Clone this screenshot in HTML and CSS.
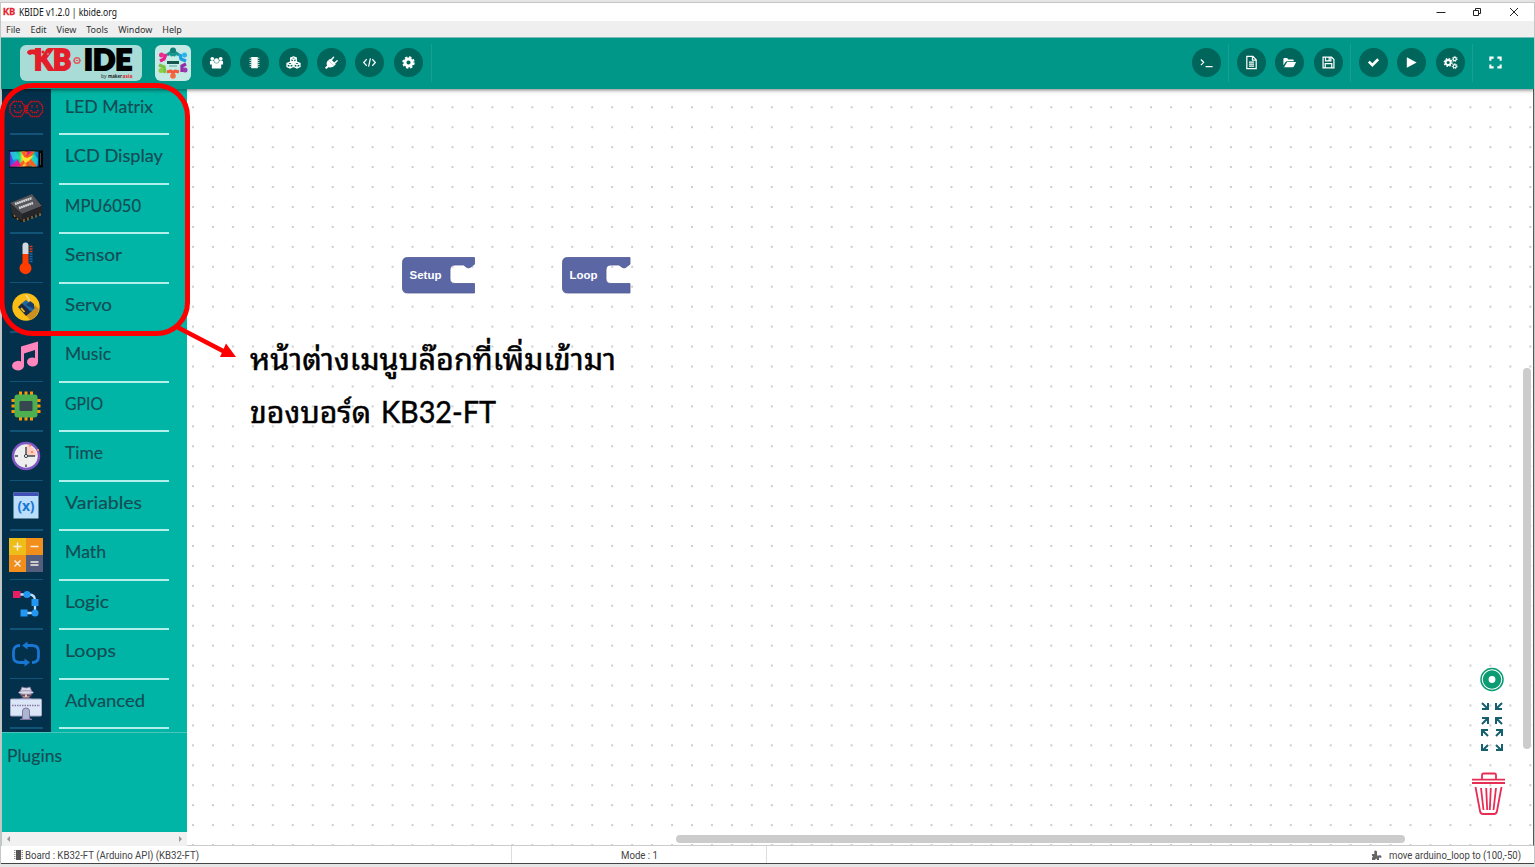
FILE: index.html
```html
<!DOCTYPE html>
<html lang="th">
<head>
<meta charset="utf-8">
<title>KBIDE v1.2.0 | kbide.org</title>
<link rel="stylesheet" href="styles.css">
</head>
<body>
<div class="window">
  <header class="titlebar">
    <svg class="app-icon" width="12" height="12" viewBox="0 0 12 12"><text x="0" y="9" textLength="12" lengthAdjust="spacingAndGlyphs" class="app-mark">KB</text></svg>
    <svg width="100" height="16" class="title"><text x="0" y="12" textLength="98" lengthAdjust="spacingAndGlyphs">KBIDE v1.2.0 | kbide.org</text></svg>
    <div class="win-controls">
      <svg width="12" height="12"><path d="M1.500 6.500h9"/></svg>
      <svg width="12" height="12"><path d="M1.500 4.500h5v5h-5zM3.500 4.500v-2h5v5h-2"/></svg>
      <svg width="12" height="12"><path d="M2 2l8 8M10 2l-8 8"/></svg>
    </div>
  </header>
  <nav class="menubar"><span>File</span><span>Edit</span><span>View</span><span>Tools</span><span>Window</span><span>Help</span></nav>

  <div class="toolbar">
    <div class="logo">
      <svg width="122" height="36" viewBox="0 0 122 36">
        <text x="14" y="25" class="logo-red" textLength="37" lengthAdjust="spacingAndGlyphs">KB</text>
        <path d="M7 8q0-3.500 5-3.500h5v6l-5-1.500q-2 2.500-5-1z" fill="#e31e2a"/>
        <circle cx="23" cy="7" r="1.600" fill="#e31e2a"/><circle cx="27" cy="5.500" r="1.300" fill="#e31e2a"/><circle cx="28" cy="9" r="1.300" fill="#a9dcd6" stroke="#e31e2a"/>
        <circle cx="57" cy="15.500" r="2.800" fill="none" stroke="#e2585c" stroke-width="1.500"/><path d="M53 15.500h2M59 15.500h2M56 15.500h2" stroke="#e2585c" stroke-width="1.200"/>
        <text x="64" y="25" class="logo-black" textLength="48" lengthAdjust="spacingAndGlyphs">IDE</text>
        <g class="logo-by"><text x="81" y="33">by</text><text x="88" y="33" class="bold" textLength="14" lengthAdjust="spacingAndGlyphs">maker</text><text x="102.500" y="33" class="bold asia" textLength="10" lengthAdjust="spacingAndGlyphs">asia</text></g>
      </svg>
    </div>
    <div class="logo community">
      <svg width="36" height="36" viewBox="0 0 36 36">
        <g fill="none" stroke-width="3.200">
          <path d="M12 10l3-2 3 3 3-3 3 2" stroke="#16988e"/><path d="M25 9l1 5 5 2" stroke="#1c9fe0"/>
          <path d="M31 19l-4 2v6" stroke="#8e2fa5"/><path d="M24 27l-4-1-2 2-2-2-4 1" stroke="#f15a3c"/>
          <path d="M10 28l-1-6-5-2" stroke="#79c143"/><path d="M5 16l4-2 2-5" stroke="#e5208c"/>
        </g>
        <circle cx="18" cy="5.500" r="3" fill="#0f7f78"/><circle cx="29.500" cy="10" r="2.500" fill="#29b4ee"/><circle cx="30" cy="25" r="2.500" fill="#9a38b0"/>
        <circle cx="18" cy="31" r="2.800" fill="#f36a40"/><circle cx="6" cy="25.500" r="2.500" fill="#8bcf45"/><circle cx="6.500" cy="10" r="2.500" fill="#ef2d91"/>
        <path d="M13 13l5-2 5 2 3 5-3 5-5 2-5-2-3-5z" fill="#c7eee7"/>
        <path d="M12 17.500h12" stroke="#14584f" stroke-width="3"/><path d="M14 21h8" stroke="#56a99f"/>
      </svg>
    </div>
    <div class="buttons main-buttons">
      <button><svg viewBox="0 0 16 16"><circle cx="3.500" cy="4" r="2"/><circle cx="12.500" cy="4" r="2"/><path d="M1 10V7.500Q1 6 2.500 6.200h3L6 8h4l.5-1.800h3Q15 6 15 7.500V10h-2v3.500q0 1-1 1H4q-1 0-1-1V10z"/><circle cx="8" cy="6" r="2.800" stroke="#00655a" stroke-width=".5"/></svg></button>
      <button><svg viewBox="0 0 16 16"><path d="M4.500 2h7v12h-7zM2.800 3h1.200v1H2.800zm0 2.300h1.200v1H2.800zm0 2.200h1.200v1H2.800zm0 2.200h1.200v1H2.800zm0 2.200h1.200v1H2.800zM12 3h1.200v1H12zm0 2.300h1.200v1H12zm0 2.200h1.200v1H12zm0 2.200h1.200v1H12zm0 2.200h1.200v1H12z"/></svg></button>
      <button><svg viewBox="0 0 16 16" class="line cube"><path d="M8 2l3 1.200v3.300L8 7.800 5 6.500V3.200zM5 3.300l3 1.400 3-1.400M8 4.700V8M4.300 7.700l3.200 1.300v3.400l-3.200 1.400-3.200-1.400V9zM1.100 9.100l3.200 1.400 3.200-1.400M4.300 10.500v3.300M11.700 7.700l3.200 1.300v3.400l-3.200 1.400-3.200-1.400V9zM8.500 9.100l3.200 1.400 3.200-1.400M11.700 10.500v3.300"/></svg></button>
      <button><svg viewBox="0 0 16 16"><path d="M4.500 5.500l6.200 6.200c-2 1.800-4.200 1.900-5.600 1L2.500 15 1 13.600l2.300-2.500C2.300 9.500 2.600 7.200 4.500 5.500zM6.200 5.700l3.500-3.900q1.300-.5 1.300.9L8.500 5.700l2.300 2.200 3-2.600q1.300 0 .9 1.200L11.200 10z"/><path d="M4.500 5.500L6.500 4l6 6-1.800 1.700z"/></svg></button>
      <button><svg viewBox="0 0 16 16" class="line"><path d="M5 4.500L1.800 8 5 11.500M11 4.500L14.200 8 11 11.500M9 3.500l-2 9"/></svg></button>
      <button><svg viewBox="0 0 16 16"><use href="#gear"/></svg></button>
    </div>
    <i class="divider first"></i>
    <div class="tool-right">
      <button><svg viewBox="0 0 16 16" class="line"><path d="M2 4.800l3 3-3 3M7 12.500h7.500"/></svg></button>
      <i class="divider"></i>
      <div class="buttons">
        <button><svg viewBox="0 0 16 16" class="line"><path d="M3 1.500h6.500l3.500 3.500v9.500H3zM9 1.500v4h4M5.300 7.500h5.400M5.300 9.700h5.400M5.300 11.900h5.400"/></svg></button>
        <button><svg viewBox="0 0 16 16"><path d="M1.500 11V4.200q0-1 1-1h3l1.300 1.500h4.700q1 0 1 1v1H5.300q-1 0-1.500.8zM5.500 7.500H15l-2.400 4.700q-.4.800-1.200.8H2.200z"/></svg></button>
        <button><svg viewBox="0 0 16 16" class="line"><path d="M2.200 2.200h9l2.600 2.600v9H2.200zM4.800 2.500v3.800h5.700V2.500M4.500 13.500V9.300h7v4.200M8.700 3v2.500"/></svg></button>
      </div>
      <i class="divider"></i>
      <div class="buttons">
        <button><svg viewBox="0 0 16 16"><path d="M2 8l2-2 2.800 2.700L12 3.500l2 2L6.800 12.700z"/></svg></button>
        <button><svg viewBox="0 0 16 16"><path d="M3 2.500L13.500 8 3 13.500z"/></svg></button>
        <button><svg viewBox="0 0 16 16" class="gears"><circle cx="5.500" cy="8" r="2.700" stroke-width="2"/><circle cx="5.500" cy="8" r="4.200" stroke-width="1.300" stroke-dasharray="1.750 1.550"/><circle cx="12.500" cy="4.200" r="1.700" stroke-width="1.300"/><circle cx="12.500" cy="4.200" r="2.700" stroke-dasharray="1.200 1.200"/><circle cx="12.500" cy="11.900" r="1.700" stroke-width="1.300"/><circle cx="12.500" cy="11.900" r="2.700" stroke-dasharray="1.200 1.200"/></svg></button>
      </div>
      <i class="divider"></i>
      <button class="flat"><svg viewBox="0 0 16 16" class="line heavy"><path d="M2.500 6V2.800H6M10 2.800h3.500V6M13.500 10v3.200H10M6 13.200H2.500V10"/></svg></button>
    </div>
  </div>

  <main class="workspace">
    <aside class="sidebar">
      <div class="toolbox">
        <div class="row"><div class="cell"><svg viewBox="0 0 34 34"><g fill="none" stroke="#d90d16" stroke-width="1.500" stroke-dasharray="1.600 .6"><path d="M4.500 9.500h7.500l3.500 4v6.500l-3.500 4.500H4.500L1 20v-6.500zM22 9.500h7.500l4 4v6.500l-4 4.500H22l-3.500-4.500v-6.500zM5 18l2 2.500h4l2-2.500M21.500 18l2 2.500h4l2-2.500M6 13v3M11 13v3M23 13v3M28 13v3M17 13v9"/></g></svg></div><div class="label"><svg><text x="0" y="18" textLength="88" lengthAdjust="spacingAndGlyphs">LED Matrix</text></svg></div></div>
        <div class="row"><div class="cell"><svg viewBox="0 0 34 34">
          <defs><linearGradient id="spectrum"><stop offset="0" stop-color="#6a25d7"/><stop offset=".18" stop-color="#168bf2"/><stop offset=".34" stop-color="#24d67b"/><stop offset=".48" stop-color="#ffed3b"/><stop offset=".62" stop-color="#ff4824"/><stop offset=".78" stop-color="#20cf78"/><stop offset="1" stop-color="#086ee8"/></linearGradient></defs>
          <path d="M0 8.500h34v17H0z" fill="#050505"/><path d="M.5 9.500h29v15H.5z" fill="url(#spectrum)"/><path d="M12 9.500l4 7-8 8h5l5-6 5 6h5l-7-9 5-6h-4l-4 6-2-6z" fill="#ff5d22"/><path d="M1 24.500l8-7 3 7zM19 9.500l-2 5 6-5z" fill="#e91894"/><path d="M1 10h6l4 6-7 2zM25 12l4 5-1 7-6-7z" fill="#24e0d0" opacity=".7"/><path d="M12 14l6 2 7-3-5 6-4 2z" fill="#ffe22c"/><path d="M31.500 11v12" stroke="#444"/></svg></div><div class="label"><svg><text x="0" y="18" textLength="98" lengthAdjust="spacingAndGlyphs">LCD Display</text></svg></div></div>
        <div class="row"><div class="cell"><svg viewBox="0 0 34 34"><path d="M1 12l22-9 10 11v8l-20 9L3 26z" fill="#171614"/><path d="M1 12L23 3l10 12-20 8z" fill="#54565b"/><path d="M1 12l12 11v7L3 23z" fill="#2b2d30"/><path d="M13 23l20-8v6l-20 9z" fill="#242529"/><path d="M15 28v3M19 26.500v3M23 25v3M27 23.500v3M31 22v3M5 24l1 2M8 27l1 2" stroke="#a5763a" stroke-width="1.300"/><path d="M6 13l17-6M10 17l14-5" stroke="#d5d5d5" stroke-width="2.400" stroke-dasharray="1.800 .4"/></svg></div><div class="label"><svg><text x="0" y="18" textLength="76" lengthAdjust="spacingAndGlyphs">MPU6050</text></svg></div></div>
        <div class="row"><div class="cell"><svg viewBox="0 0 34 34"><path d="M13.500 13V4.500a3 3 0 0 1 6 0V13z" fill="#d3dadd"/><path d="M13.500 13h6v9a6 6 0 1 1-6 0z" fill="#ff3d00"/><path d="M20.500 5.500h3M20.500 8h3M20.500 10.500h3" stroke="#dd3a13" stroke-width="1.300"/><path d="M20.500 13h3M20.500 15.500h3M20.500 18h3M20.500 20.500h3" stroke="#1467b5" stroke-width="1.300"/></svg></div><div class="label"><svg><text x="0" y="18" textLength="57" lengthAdjust="spacingAndGlyphs">Sensor</text></svg></div></div>
        <div class="row"><div class="cell"><svg viewBox="0 0 34 34"><circle cx="17" cy="17" r="13.700" fill="#fabe17"/><path d="M17 25l9-10 4 4q-2 9-9 11z" fill="#c99122"/><path d="M9 17l4-4 10 8-6 5z" fill="#182b43"/><path d="M13 13l4-3 9 8-4 4z" fill="#1e66a4"/><path d="M17 15l4-4 4 3v5z" fill="#173e66"/><path d="M12 18l3.500 4" stroke="#fabe17" stroke-width="1.800"/><path d="M17 5l4 6" stroke="#eed79b" stroke-width="1.500"/></svg></div><div class="label"><svg><text x="0" y="18" textLength="47" lengthAdjust="spacingAndGlyphs">Servo</text></svg></div></div>
        <div class="row"><div class="cell"><svg viewBox="0 0 34 34"><path d="M12 6.500L29 1.500V22a5.500 4.500 0 1 1-3-4V10L15 13.500V26a6 4.800 0 1 1-3-4.500z" fill="#ff86bc"/></svg></div><div class="label"><svg><text x="0" y="18" textLength="46" lengthAdjust="spacingAndGlyphs">Music</text></svg></div></div>
        <div class="row"><div class="cell"><svg viewBox="0 0 34 34"><path d="M11.500 2.500v29M17 2.500v29M22.500 2.500v29M2.500 11.500h29M2.500 17h29M2.500 22.500h29" stroke="#ff9800" stroke-width="3"/><rect x="5.500" y="5.500" width="23" height="23" rx="3" fill="#4caf50"/><rect x="10.500" y="12" width="13" height="10" rx="1" fill="#37474f"/></svg></div><div class="label"><svg><text x="0" y="18" textLength="38" lengthAdjust="spacingAndGlyphs">GPIO</text></svg></div></div>
        <div class="row"><div class="cell"><svg viewBox="0 0 34 34"><circle cx="17" cy="17" r="13" fill="#eee" stroke="#7e57c2" stroke-width="2.500"/><path d="M17 17V6.500q9 1 11 10.500z" fill="#ffcdbf"/><path d="M20 6l2 1M28 11h2M22 13h2" stroke="#ff8469" stroke-width="2"/><path d="M17 8v9h9M6 17h3M17 25.500V28" fill="none" stroke="#37474f" stroke-width="1.400"/><circle cx="17" cy="17" r="1.600" fill="#eee" stroke="#37474f"/></svg></div><div class="label"><svg><text x="0" y="18" textLength="38" lengthAdjust="spacingAndGlyphs">Time</text></svg></div></div>
        <div class="row"><div class="cell"><svg viewBox="0 0 34 34"><path d="M4.500 4.500h25v26h-25z" fill="#bbdefb"/><path d="M4.500 4.500h25V8h-25z" fill="#3f51b5"/><text x="8.500" y="23" textLength="17" class="var-mark">(x)</text></svg></div><div class="label"><svg><text x="0" y="18" textLength="77" lengthAdjust="spacingAndGlyphs">Variables</text></svg></div></div>
        <div class="row"><div class="cell"><svg viewBox="0 0 34 34"><path d="M0 0h17v17H0z" fill="#efbd19"/><path d="M17 0h17v17H17zM0 17h17v17H0z" fill="#f28e1b"/><path d="M17 17h17v17H17z" fill="#555d7c"/><path d="M4.500 8.500h8M8.500 4.500v8M21.500 8.500h8M5.500 22.500l6 6M11.500 22.500l-6 6M21.500 24h8M21.500 27h8" stroke="#f5eee5" stroke-width="1.500"/></svg></div><div class="label"><svg><text x="0" y="18" textLength="41" lengthAdjust="spacingAndGlyphs">Math</text></svg></div></div>
        <div class="row"><div class="cell"><svg viewBox="0 0 34 34"><path d="M8 7.500h12q6 0 6 6V26H15" fill="none" stroke="#bbdefb" stroke-width="2.300"/><path d="M4 4h7.500v7H4z" fill="#e91e63"/><circle cx="18" cy="7.500" r="3.500" fill="#2196f3"/><path d="M22.500 12h7v7h-7zM11.500 22.500h7v7h-7z" fill="#2196f3"/><circle cx="26" cy="26" r="3.500" fill="#2196f3"/></svg></div><div class="label"><svg><text x="0" y="18" textLength="44" lengthAdjust="spacingAndGlyphs">Logic</text></svg></div></div>
        <div class="row"><div class="cell"><svg viewBox="0 0 34 34"><path d="M11 8.500q-6.500 0-6.500 6v5q0 6 6.500 6h6M23 25.500q6.500 0 6.500-6v-5q0-6-6.500-6h-6" fill="none" stroke="#1976d2" stroke-width="2.800"/><path d="M18.500 4.500L13 8.500l5.500 4zM15.500 21.500l5.500 4-5.500 4z" fill="#1976d2"/></svg></div><div class="label"><svg><text x="0" y="18" textLength="51" lengthAdjust="spacingAndGlyphs">Loops</text></svg></div></div>
        <div class="row"><div class="cell"><svg viewBox="0 0 34 34"><path d="M11.500 8q5.500 9 11 0z" fill="#f0c5aa"/><path d="M13 1q4 2 8 0l2 5H11z" fill="#d9d9e9" stroke="#86799b" stroke-width=".8"/><ellipse cx="17" cy="6.500" rx="7.500" ry="1.800" fill="#d9d9e9" stroke="#86799b" stroke-width=".7"/><path d="M11 8.500h5v2h-4zM18 8.500h5l-1 2h-4z" fill="#644d67"/><path d="M9 14q8-6 16 0z" fill="#76658a"/><rect x="1.500" y="13" width="31" height="17" rx="1" fill="#dbe6f6" stroke="#a5a7c9"/><path d="M3 19.500h28" stroke="#867aa4" stroke-width="1.500" stroke-dasharray="1.500 1"/><path d="M11 33.500l2.500-1V25q0-3 3.500-3t3.500 3v7.500l2.500 1z" fill="#abb6d1" stroke="#8476a2"/></svg></div><div class="label"><svg><text x="0" y="18" textLength="80" lengthAdjust="spacingAndGlyphs">Advanced</text></svg></div></div>
      </div>
      <div class="plugins"><svg width="70" height="28"><text x="0" y="18" textLength="55" lengthAdjust="spacingAndGlyphs">Plugins</text></svg></div>
      <div class="side-scroll"><svg width="5" height="8"><path d="M4 1L1 4l3 3z"/></svg><svg width="5" height="8"><path d="M1 1l3 3-3 3z"/></svg></div>
    </aside>
    <section class="canvas">
      <svg class="grid" width="1346" height="758">
        <defs><pattern id="dots" x="-4" y="8.300" width="19.960" height="19.940" patternUnits="userSpaceOnUse"><path d="M9 10h2M10 9v2" stroke="#bcbcbc" stroke-width="1"/></pattern></defs>
        <rect width="1346" height="758" fill="url(#dots)"/>
      </svg>
      <svg class="block setup" width="73" height="37" viewBox="0 0 73 37"><path d="M5.500.5h67v6.700l-4 3q-2 1.500-4 0l-3-2.200H53q-5 0-5 5v8.500q0 5 5 5h19.500v9.500h-67q-5 0-5-5v-25.500q0-5 5-5z"/><text x="7.500" y="22" textLength="32" lengthAdjust="spacingAndGlyphs">Setup</text></svg>
      <svg class="block loop" width="69" height="37" viewBox="0 0 69 37"><path d="M5.500.5H68v6.700l-4 3q-2 1.500-4 0l-3-2.200H49q-5 0-5 5v8.500q0 5 5 5h19v9.500H5.500q-5 0-5-5v-25.500q0-5 5-5z"/><text x="7.500" y="22" textLength="28" lengthAdjust="spacingAndGlyphs">Loop</text></svg>
      <svg class="canvas-tools" width="36" height="160" viewBox="0 0 36 160">
        <circle cx="21" cy="19.500" r="11" fill="#fff" stroke="#0b9c74" stroke-width="1.500"/><circle cx="21" cy="19.500" r="6.300" fill="#fff" stroke="#0b9c74" stroke-width="5.800"/>
        <g fill="none" stroke="#17606f" stroke-width="2"><path d="M11 43l5 5M17 43v6h-6M31 43l-5 5M25 43v6h6M11 64l5-5M11 58h6v6M31 64l-5-5M31 58h-6v6M17 76l-5-5M11 76v-6h6M25 76l5-5M31 76v-6h-6M17 85l-5 5M11 84v6h6M25 85l5 5M31 84v6h-6"/></g>
        <g fill="none" stroke="#e82d55" stroke-width="1.800"><path d="M11 119v-4q0-1.500 1.500-1.500h11q1.500 0 1.500 1.500v4M1 119.700h33M1 123h33M4.500 127l4.500 24q.5 3 3 3h11q2.500 0 3-3l4.500-24M10 128l2.500 22M15.200 128l1 22M19.800 128l-1 22M25 128l-2.500 22"/></g>
      </svg>
      <i class="scroll-v"></i><i class="scroll-h"></i>
    </section>
  </main>
  <footer class="statusbar">
    <div class="board"><svg width="9" height="12"><path d="M2 1h5v10H2z" fill="#555"/><path d="M.8 1v10M8.200 1v10" stroke="#777" stroke-width="1.200" stroke-dasharray="1 1"/></svg><svg width="180" height="16"><text x="0" y="12" textLength="174" lengthAdjust="spacingAndGlyphs">Board : KB32-FT (Arduino API) (KB32-FT)</text></svg></div>
    <div class="mode"><svg width="38" height="16"><text x="0" y="12" textLength="37" lengthAdjust="spacingAndGlyphs">Mode : 1</text></svg></div>
    <div class="event"><svg width="12" height="12"><path d="M1 5h2.500q-1-3.500 1-3.500T6 5v1.500h1.500q2.500-1 3 1t-2.500 1V11H6q-.5-3-2 0H1V8.500q2-1 0-1.500z" fill="#666"/></svg><svg width="133" height="16"><text x="0" y="12" textLength="132" lengthAdjust="spacingAndGlyphs">move arduino_loop to (100,-50)</text></svg></div>
  </footer>
</div>
<svg class="annotation" width="1535" height="867" viewBox="0 0 1535 867">
  <rect x="2" y="85.500" width="185.500" height="248" rx="31" fill="none" stroke="#f00" stroke-width="5"/>
  <path d="M177 327L224 351.500" stroke="#f00" stroke-width="4.500"/><path d="M226 343.500L236 357l-16 0z" fill="#f00" stroke="none"/>
  <text x="250" y="370" textLength="366" lengthAdjust="spacingAndGlyphs">หน้าต่างเมนูบล๊อกที่เพิ่มเข้ามา</text>
  <text x="250" y="423" textLength="121" lengthAdjust="spacingAndGlyphs">ของบอร์ด</text>
  <text x="381" y="423" class="latin" textLength="115" lengthAdjust="spacingAndGlyphs">KB32-FT</text>
</svg>
<svg width="0" height="0" class="symbols"><symbol id="gear" viewBox="0 0 16 16"><circle cx="8" cy="8" r="3.800" fill="none" stroke="#fff" stroke-width="3.200"/><circle cx="8" cy="8" r="5.800" fill="none" stroke="#fff" stroke-width="1.700" stroke-dasharray="2.550 2"/></symbol></svg>
</body>
</html>
```
FILE: styles.css
```css
* { box-sizing: border-box; }
body { margin: 0; width: 1535px; height: 867px; overflow: hidden; position: relative; background: #e5e5e5; font-family: Roboto, sans-serif; }
svg { display: block; flex: none; overflow: visible; }
.symbols { position: absolute; }
.window { width: 1533px; height: 862px; margin: 2px 0 0 1px; display: grid; grid-template-rows: 18px 16px 52px 757px 18px; border-top: 1px solid #c6c6c6; box-shadow: -1px 0 #c6c6c6, 1px 0 #c6c6c6; background: #fff; }
.titlebar { display: flex; align-items: center; padding-left: 2px; }
.app-mark { font: 900 9px Lato, sans-serif; fill: #e31e2a; stroke: #e31e2a; stroke-width: .3px; }
.title { margin-left: 4px; font: 10px "Noto Sans", sans-serif; fill: #111; }
.win-controls { margin-left: auto; margin-right: 14px; display: flex; gap: 24.5px; fill: none; stroke: #222; stroke-width: 1; }
.menubar { background: #efefef; display: flex; align-items: center; padding: 1px 0 0 5px; gap: 10px; font: 9px/14px "Noto Sans", sans-serif; color: #333; }
.toolbar { background: #009688; display: flex; align-items: center; padding: 0 0 2px 19px; position: relative; border-top: 1px solid #7cbcb5; box-shadow: 0 1px 4px #0008; z-index: 1; clip-path: inset(0 0 -8px 0); }
.logo { width: 122px; height: 36px; border-radius: 6px; background: #a9dcd6; }
.community { width: 36px; margin-left: 13px; background: #c5e9e4; }
.logo-red, .logo-black { font: 900 28px Lato, sans-serif; stroke-width: 2px; }
.logo-red { fill: #e31e2a; stroke: #e31e2a; }
.logo-black { fill: #000; stroke: #000; }
.logo-by { font: 5px "Open Sans", sans-serif; fill: #222; }
.bold { font-weight: 700; }
.asia { fill: #e31e2a; }
.buttons { display: flex; gap: 9.35px; }
.main-buttons { margin-left: 11px; }
button { width: 29px; height: 29px; padding: 0; border: 0; border-radius: 50%; background: #00655a; display: grid; place-items: center; }
button svg { width: 15px; height: 15px; fill: #fff; }
button svg.line { fill: none; stroke: #fff; stroke-width: 1.3; }
button svg.gears { fill: none; stroke: #fff; }
button svg.cube { stroke-width: 1.4; }
button svg.heavy { stroke-width: 2.2; }
.flat { background: none; }
.divider { width: 1px; height: 38px; background: #199f92; }
.first { margin-left: 8px; }
.tool-right { margin-left: auto; padding-right: 24px; display: flex; align-items: center; gap: 7.7px; }
.workspace { display: grid; grid-template-columns: 186px 1fr; min-height: 0; }
.sidebar { border-left: 1px solid #b9c7c6; background: #00b5a5; display: grid; grid-template-rows: 644px 1fr 14px; min-height: 0; font: 17px Lato, sans-serif; }
.toolbox { background: linear-gradient(90deg, #03314b 49px, #00b5a5 49px); border-bottom: 1px solid #49c5bb; }
.row { height: 49.5px; display: flex; }
.cell { width: 49px; padding: 3px 0 0 7px; }
.cell svg { width: 34px; height: 34px; }
.cell::after { content: ""; display: block; width: 33px; height: 1.5px; margin: 7px 0 0 1px; background: #125478; }
.label { padding: 5.5px 0 0 6px; margin-left: 8px; height: 46px; width: 110px; border-bottom: 2px solid #b2f0ec; }
.label svg { width: 103px; height: 27px; }
.label text, .plugins text { fill: #144b55; stroke: #144b55; stroke-width: .15px; }
.var-mark { font: 700 14px "Open Sans", sans-serif; fill: #1976d2; }
.plugins { padding: 11px 0 0 5px; }
.side-scroll { background: #f1f1f1; display: flex; justify-content: space-between; align-items: center; padding: 0 4px; fill: #999; }
.canvas { position: relative; background: #fff; overflow: hidden; border-right: 1px solid #555; border-bottom: 1px solid #ccc; }
.block { position: absolute; top: 167.5px; fill: #5b67a5; stroke: #505b96; stroke-width: .8px; }
.block text { font: 700 11.5px "Liberation Sans", sans-serif; fill: #fff; stroke: none; }
.setup { left: 215px; }
.loop { left: 375px; }
.canvas-tools { position: absolute; left: 1284px; top: 571px; }
.scroll-v, .scroll-h { position: absolute; border-radius: 4px; background: #ccc; }
.scroll-v { left: 1336px; top: 279px; width: 8px; height: 381px; }
.scroll-h { left: 489px; top: 746px; width: 729px; height: 8px; }
.statusbar { display: grid; grid-template-columns: 511px 255px 1fr; background: #fff; border-bottom: 1px solid #444; font-size: 10px; fill: #444; }
.statusbar > div { display: flex; align-items: center; padding-top: 1px; border-right: 1px solid #ddd; }
.statusbar .board { padding-left: 13px; gap: 2px; }
.statusbar .mode { justify-content: center; padding-left: 2px; }
.statusbar .event { justify-content: flex-end; gap: 6px; border: 0; padding-right: 12px; }
.annotation { position: absolute; left: 0; top: 0; z-index: 3; pointer-events: none; font: 30px "Noto Sans Thai Looped", Loma, Garuda, Waree, "Noto Serif Thai", "Noto Sans", sans-serif; fill: #000; stroke: #000; stroke-width: .5px; }
.annotation .latin { font: 30px Lato, sans-serif; }
```
